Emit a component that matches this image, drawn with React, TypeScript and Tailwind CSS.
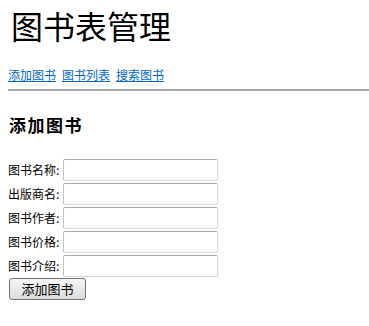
const fields = ['图书名称', '出版商名', '图书作者', '图书价格', '图书介绍']

const App = () => {
  return (
    <div className="px-2 text-black font-['Noto_Sans_CJK_SC',sans-serif]">
      <h1 className="pt-[8px] pl-[3px] text-[32px] leading-[34px] font-normal">图书表管理</h1>

      <div className="mt-[26px] flex gap-[6px] text-[12px] leading-[14px]">
        <a href="#" className="text-[#0066cc] underline">添加图书</a>
        <a href="#" className="text-[#0066cc] underline">图书列表</a>
        <a href="#" className="text-[#0066cc] underline">搜索图书</a>
      </div>

      <div className="mt-[7px] -mr-2 border-t-2 border-[#a8a8a8]" />

      <h3 className="mt-[24px] pl-[1px] text-[17px] leading-[20px] font-bold tracking-[1.5px]">添加图书</h3>

      <form className="mt-[23px] flex flex-col">
        {fields.map((f) => (
          <div key={f} className="flex items-center h-[24px] text-[12px]">
            <span className="w-[55px]">{f}:</span>
            <input
              type="text"
              className="w-[155px] h-[22px] border border-[#d4d4d8] border-t-[#a9a9a9] border-l-[#c0c0c0] rounded-[2px] bg-white"
            />
          </div>
        ))}
        <div className="flex">
          <button
            type="button"
            className="ml-[1px] w-[77px] h-[22px] rounded-[3px] border border-[#707070] bg-gradient-to-b from-[#f6f6f6] to-[#dcdcdc] text-[13px] leading-[20px]"
          >
            添加图书
          </button>
        </div>
      </form>
    </div>
  )
}

export default App
